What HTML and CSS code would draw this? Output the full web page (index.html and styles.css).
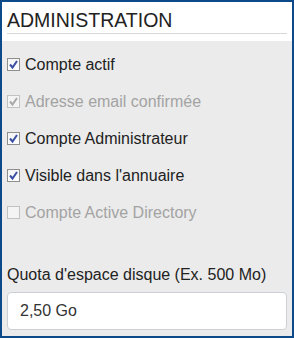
FILE: index.html
```html
<!DOCTYPE html>
<html>
<head>
<meta charset="utf-8">
<link rel="stylesheet" href="styles.css">
</head>
<body>
<div class="panel">
  <div class="panel-head"><h2 class="title">ADMINISTRATION</h2></div>
  <div class="panel-body">
    <label class="check"><span class="box"><svg viewBox="0 0 13 13" width="13" height="13"><path d="M3 6.5 L5.5 9.5 L10 3" fill="none" stroke="#3a4ea3" stroke-width="2"/></svg></span>Compte actif</label>
    <label class="check disabled"><span class="box"><svg viewBox="0 0 13 13" width="13" height="13"><path d="M3 6.5 L5.5 9.5 L10 3" fill="none" stroke="#a9a9a9" stroke-width="2"/></svg></span>Adresse email confirmée</label>
    <label class="check"><span class="box"><svg viewBox="0 0 13 13" width="13" height="13"><path d="M3 6.5 L5.5 9.5 L10 3" fill="none" stroke="#3a4ea3" stroke-width="2"/></svg></span>Compte Administrateur</label>
    <label class="check"><span class="box"><svg viewBox="0 0 13 13" width="13" height="13"><path d="M3 6.5 L5.5 9.5 L10 3" fill="none" stroke="#3a4ea3" stroke-width="2"/></svg></span>Visible dans l'annuaire</label>
    <label class="check disabled"><span class="box"></span>Compte Active Directory</label>
    <div class="field">
      <div class="field-label">Quota d'espace disque (Ex. 500 Mo)</div>
      <div class="input">2,50 Go</div>
    </div>
  </div>
</div>
</body>
</html>
```
FILE: styles.css
```css
html, body {
  margin: 0;
  padding: 0;
}
body {
  font-family: "Liberation Sans", Arial, sans-serif;
  color: #222;
}
.panel {
  width: 294px;
  height: 338px;
  box-sizing: border-box;
  border: 2px solid #0c4a8a;
  background: #ebebeb;
  display: flex;
  flex-direction: column;
}
.panel-head {
  background: #fff;
  padding: 7px 5px 7px 5px;
}
.title {
  margin: 0;
  font-weight: normal;
  font-size: 19.5px;
  line-height: 22px;
  padding-bottom: 2px;
  border-bottom: 1px solid #d8d8d8;
  color: #222;
}
.panel-body {
  padding: 13px 5px 0 5px;
}
.check {
  display: flex;
  align-items: center;
  gap: 5px;
  font-size: 16px;
  line-height: 21px;
  margin-bottom: 16px;
  color: #222;
}
.check.disabled {
  color: #a3a3a3;
}
.box {
  width: 13px;
  height: 13px;
  box-sizing: border-box;
  border: 1px solid #8f8f8f;
  background: linear-gradient(#f4f4f4, #ffffff);
  position: relative;
  flex: none;
}
.box svg {
  position: absolute;
  left: -1px;
  top: -1px;
}
.check.disabled .box {
  border-color: #c2c2c2;
  background: #f4f4f4;
}
.field {
  padding-top: 25px;
}
.field-label {
  font-size: 16px;
  line-height: 21px;
  color: #222;
}
.input {
  margin-top: 7px;
  height: 38px;
  box-sizing: border-box;
  border: 1px solid #ccd0d4;
  border-radius: 4px;
  background: #fff;
  padding: 0 12px;
  display: flex;
  align-items: center;
  font-size: 16px;
  color: #333;
}
```
